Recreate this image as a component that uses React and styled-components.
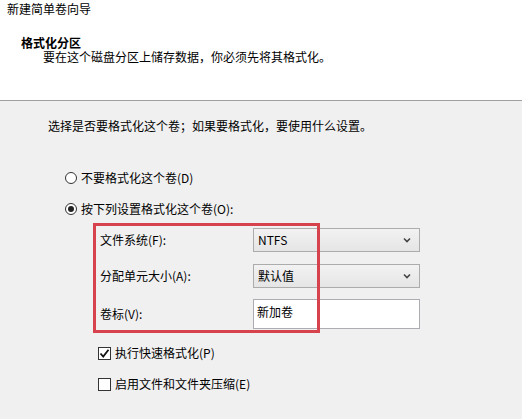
import styled, { createGlobalStyle } from "styled-components";

const GlobalStyle = createGlobalStyle`
  *, *::before, *::after {
    box-sizing: border-box;
  }
  html, body {
    margin: 0;
    padding: 0;
    background: #fff;
  }
  body {
    font-family: "Noto Sans CJK SC", "Microsoft YaHei", sans-serif;
    font-size: 12px;
    color: #000;
  }
`;

const Wizard = styled.div`
    width: 525px;
    height: 419px;
    display: flex;
    flex-direction: column;
    overflow: hidden;
    background: #fff;
`;

// 顶部白色标题区
const Header = styled.div`
    width: 522px;
    height: 101px;
    flex-shrink: 0;
    padding: 1px 0 0 7px;
    background: #fff;
    border-bottom: 1px solid #a0a0a0;
`;

const WindowTitle = styled.div`
    line-height: 16px;
`;

const Heading = styled.div`
    margin-top: 19px;
    padding-left: 14px;
    font-weight: bold;
    line-height: 14px;
`;

const Description = styled.div`
    padding-left: 36px;
    line-height: 14px;
`;

// 灰色内容区
const Body = styled.div`
    position: relative;
    width: 522px;
    flex: 1;
    padding: 17px 0 0 48px;
    background: #f0f0f0;
`;

const Intro = styled.div`
    line-height: 16px;
`;

const Options = styled.div`
    padding-left: 17px;
    margin-top: 36px;
    display: flex;
    flex-direction: column;
`;

const OptionRow = styled.div`
    display: flex;
    align-items: center;
    gap: 4px;
    height: 16px;
    margin-top: ${(p) => p.$gap || 0}px;
    margin-left: ${(p) => p.$indent || 0}px;
    line-height: 16px;
`;

const Radio = styled.span`
    width: 12px;
    height: 12px;
    border-radius: 50%;
    border: 1px solid #333;
    background: #fff;
    display: flex;
    align-items: center;
    justify-content: center;

    &::after {
        content: "";
        width: 6px;
        height: 6px;
        border-radius: 50%;
        background: #222;
        display: ${(p) => (p.$checked ? "block" : "none")};
    }
`;

const CheckBox = styled.span`
    width: 13px;
    height: 13px;
    border: 1px solid #333;
    background: #fff;
    display: flex;
    align-items: center;
    justify-content: center;
`;

const Settings = styled.div`
    margin: 11px 0 0 35px;
    display: grid;
    grid-template-columns: 153px 167px;
    grid-template-rows: 24px 24px 30px;
    row-gap: 12px;
    align-items: center;

    > :nth-child(n + 5) {
        margin-top: -2px;
    }
`;

const Label = styled.div`
    line-height: 16px;
`;

const Select = styled.div`
    height: 24px;
    padding: 0 8px 0 4px;
    display: flex;
    align-items: center;
    justify-content: space-between;
    border: 1px solid #acacac;
    background: linear-gradient(#f2f2f2, #e5e5e5);
    line-height: 16px;
`;

const TextBox = styled.div`
    height: 30px;
    padding: 4px 0 0 3px;
    border: 1px solid #abadb3;
    background: #fff;
    line-height: 16px;
`;

// 红色标注框
const Highlight = styled.div`
    position: absolute;
    left: 93px;
    top: 122px;
    width: 227px;
    height: 110px;
    border: 3px solid #d6434c;
    pointer-events: none;
`;

const Chevron = () => (
    <svg width="8" height="6" viewBox="0 0 8 6">
        <polyline points="1,1.5 4,4.5 7,1.5" fill="none" stroke="#444" strokeWidth="1.6" />
    </svg>
);

const Tick = () => (
    <svg width="11" height="11" viewBox="0 0 11 11">
        <polyline points="1.5,5.5 4.2,8.5 9.5,1.8" fill="none" stroke="#111" strokeWidth="1.8" />
    </svg>
);

const App = () => {
    return (
        <Wizard>
            <GlobalStyle />
            <Header>
                <WindowTitle>新建简单卷向导</WindowTitle>
                <Heading>格式化分区</Heading>
                <Description>要在这个磁盘分区上储存数据，你必须先将其格式化。</Description>
            </Header>
            <Body>
                <Intro>选择是否要格式化这个卷；如果要格式化，要使用什么设置。</Intro>
                <Options>
                    <OptionRow>
                        <Radio />
                        <span>不要格式化这个卷(D)</span>
                    </OptionRow>
                    <OptionRow $gap={15}>
                        <Radio $checked />
                        <span>按下列设置格式化这个卷(O):</span>
                    </OptionRow>
                    <Settings>
                        <Label>文件系统(F):</Label>
                        <Select>
                            <span>NTFS</span>
                            <Chevron />
                        </Select>
                        <Label>分配单元大小(A):</Label>
                        <Select>
                            <span>默认值</span>
                            <Chevron />
                        </Select>
                        <Label>卷标(V):</Label>
                        <TextBox>新加卷</TextBox>
                    </Settings>
                    <OptionRow $gap={15} $indent={33}>
                        <CheckBox>
                            <Tick />
                        </CheckBox>
                        <span>执行快速格式化(P)</span>
                    </OptionRow>
                    <OptionRow $gap={15} $indent={33}>
                        <CheckBox />
                        <span>启用文件和文件夹压缩(E)</span>
                    </OptionRow>
                </Options>
                <Highlight />
            </Body>
        </Wizard>
    );
};

export default App;
